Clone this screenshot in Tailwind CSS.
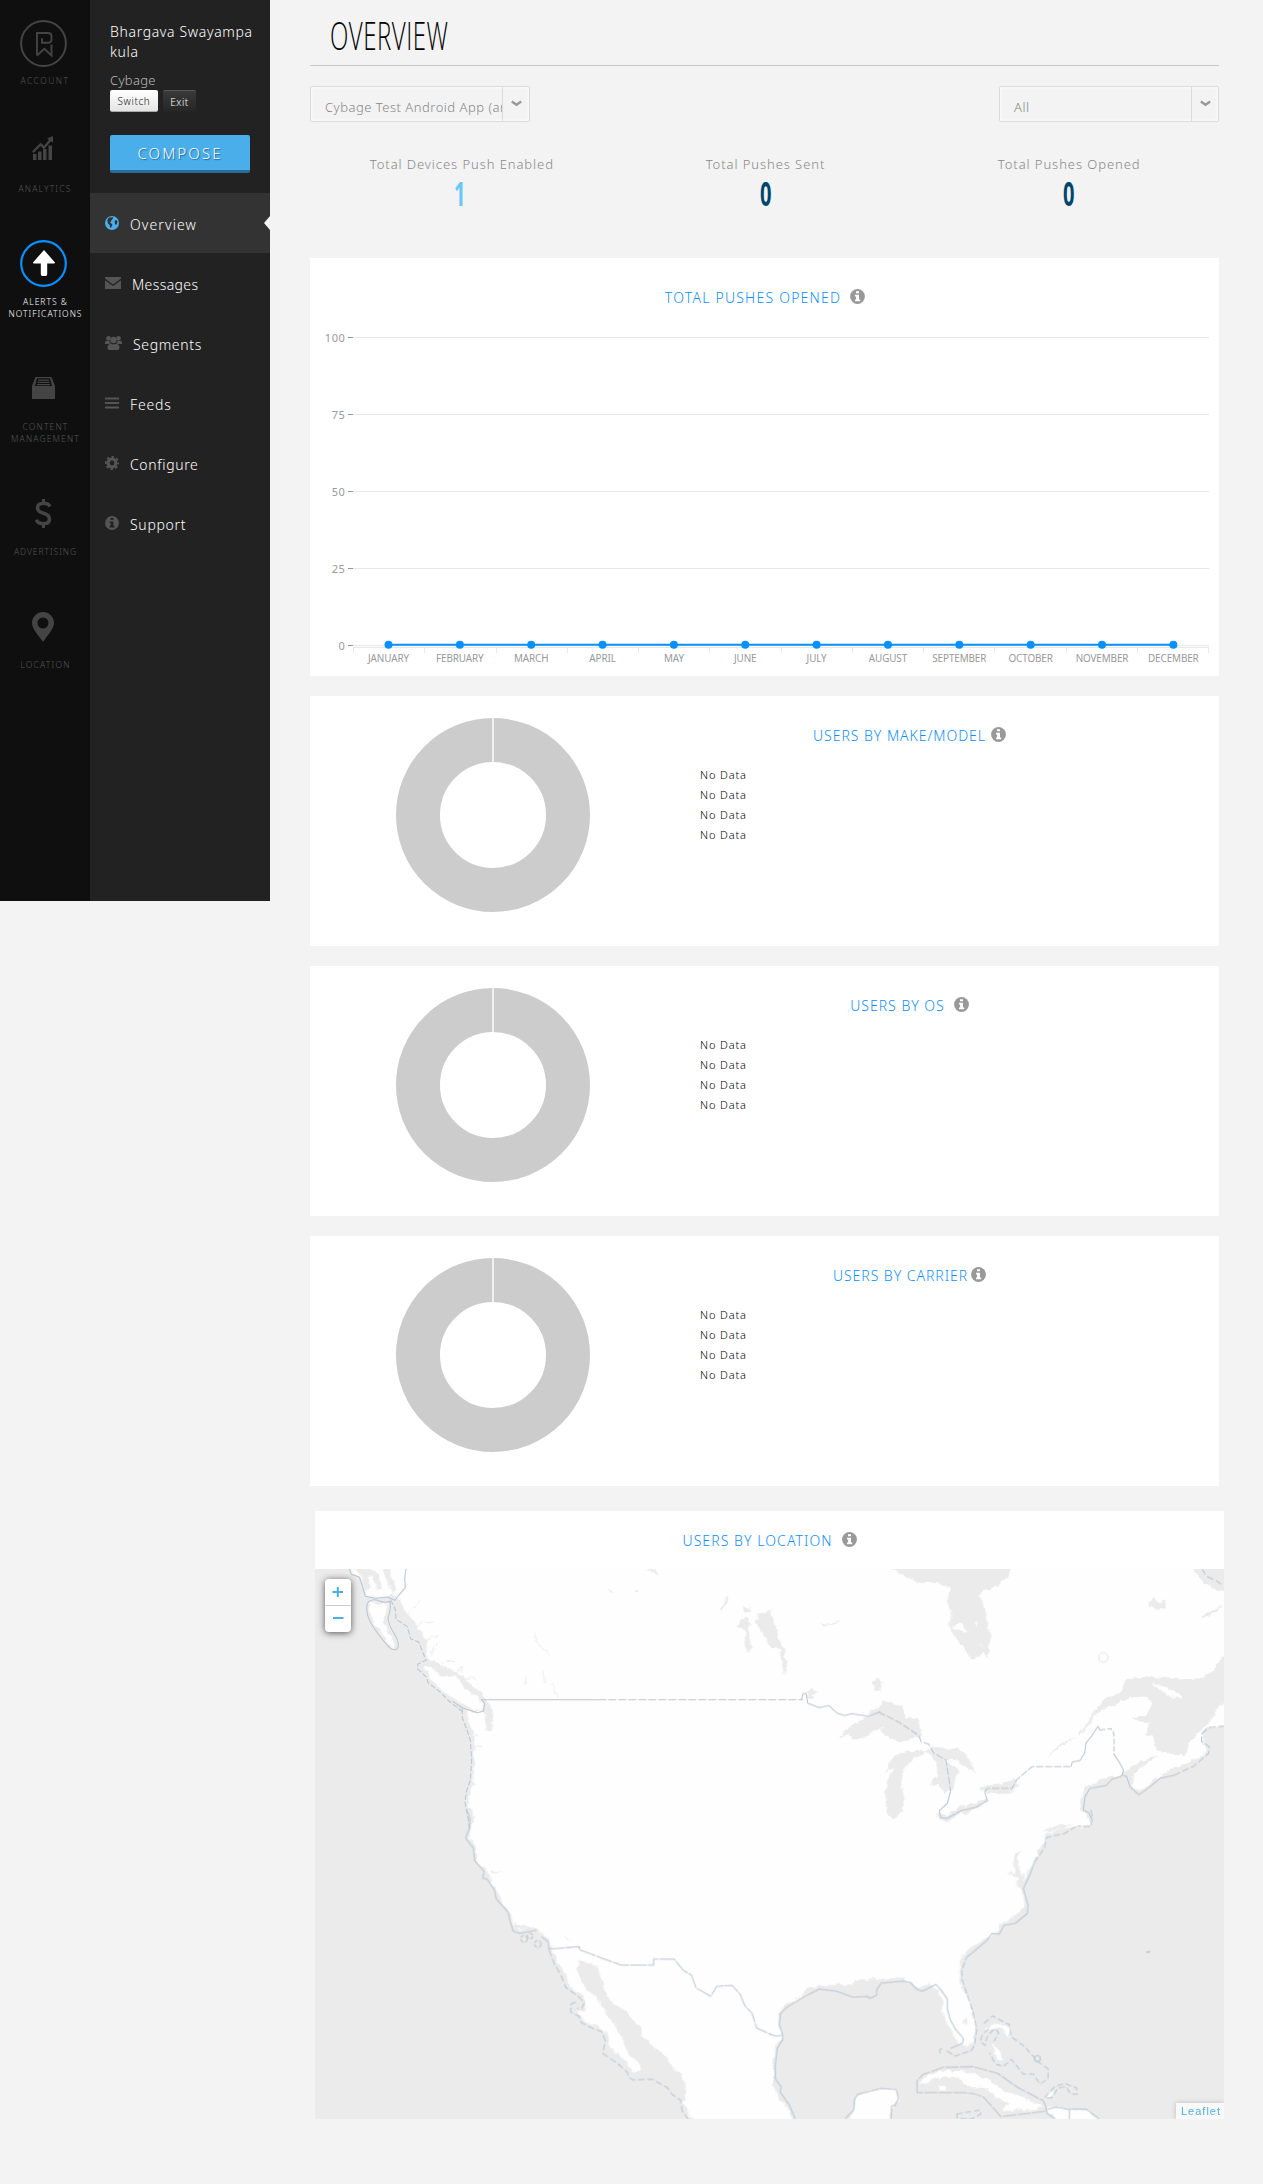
<!DOCTYPE html>
<html lang="en">
<head>
<meta charset="utf-8">
<title>Overview</title>
<script src="https://cdn.jsdelivr.net/npm/@tailwindcss/browser@4"></script>
</head>
<body class="flex h-[2184px] w-[1263px] items-start overflow-hidden bg-[#f3f3f3] font-['Noto_Sans',sans-serif] font-light">

<svg class="hidden">
  <symbol id="info" viewBox="0 0 15 15"><circle cx="7.5" cy="7.5" r="7.4" fill="currentColor"/><path fill="var(--hole,#fff)" d="M6 2.2h3v2.1H6zM5 5.8h4v4.6h1.2v1.8H5v-1.8h1.1V7.5H5z"/></symbol>
  <symbol id="donut" viewBox="0 0 196 196"><circle cx="98" cy="98" r="75" fill="none" stroke="#ccc" stroke-width="44"/><path d="M98 0v46" stroke="#fff" stroke-width="1.4"/></symbol>
</svg>

<!-- Product rail -->
<aside class="flex h-[901px] w-[90px] shrink-0 flex-col items-center bg-[#0f0f0f] pt-5 pr-[2px] text-center text-[8.5px] leading-3 text-[#555]">
  <svg class="-ml-[1px] size-[47px] shrink-0" viewBox="0 0 47 47" fill="none" stroke="#444" stroke-width="1.9"><circle cx="23.5" cy="23.5" r="22.4" stroke-width="2"/><path d="M17 35.500V13h11q3.500 0 3.500 3.500v2.800q0 3.500-3.500 3.500H22v-4.500M17 35.500l7.300-6.800 7.200 6.800V24.500"/></svg>
  <span class="mt-2 pl-[2px] tracking-[1.5px]">ACCOUNT</span>
  <svg class="-ml-[4px] mt-[49px] h-6 w-[21px] shrink-0" viewBox="0 0 21 24" fill="#444"><path d="M1 18h3.500v6H1zM6 15.500h3.500V24H6zM11 13h3.500v11H11zM16.500 9.500H20V24h-3.500z"/><path d="M0 15.500 8.500 6.700l3.500 3L17 4l-2-1.500L21 0v6.500l-2-1.200-7 8-3.600-3.200-6.600 6.800z"/></svg>
  <span class="mt-[23px] pl-[2px] tracking-[1.2px]">ANALYTICS</span>
  <svg class="-ml-[1px] mt-[45px] size-[47px] shrink-0" viewBox="0 0 47 47"><circle cx="23.5" cy="23.5" r="22.3" fill="none" stroke="#0990ff" stroke-width="2.200"/><path fill="#fff" d="M24 10 35 22.500q0 1-1 1h-6.800V34q0 2-1.500 2h-3.400q-1.500 0-1.500-2V23.500H14q-1 0-1-1z"/></svg>
  <span class="mt-[9px] whitespace-nowrap pl-[3px] tracking-[1px] text-white">ALERTS &amp;<br>NOTIFICATIONS</span>
  <svg class="-ml-[1px] mt-[57px] h-[22px] w-[23px] shrink-0" viewBox="0 0 23 22" fill="#444"><path fill-rule="evenodd" d="M3.500 0h16L23 9v13H0V9zM5 1.200 3 9h17l-2-7.800z"/><path d="M6 2.600h11v1.200H6zM5.500 4.800h12V6h-12zM5 7h13v1.200H5z"/></svg>
  <span class="mt-[22px] whitespace-nowrap pl-[3px] tracking-[1.15px]">CONTENT<br>MANAGEMENT</span>
  <svg class="-ml-[1px] mt-[54px] h-[29px] w-[17px] shrink-0" viewBox="0 0 17 29" fill="none" stroke="#444"><path d="M15 7.500Q13.500 4.300 8.500 4.300 2.500 4.300 2.500 9q0 3.600 6 5.200t6 5.800q0 4.700-6 4.700-5.500 0-7.200-4" stroke-width="3.600"/><path d="M8.500 0v4M8.500 25v4" stroke-width="3"/></svg>
  <span class="mt-[18px] whitespace-nowrap pl-[3px] tracking-[0.95px]">ADVERTISING</span>
  <svg class="-ml-[2px] mt-[54px] h-[30px] w-[22px] shrink-0" viewBox="0 0 22 30"><path fill="#444" fill-rule="evenodd" d="M11 0a11 11 0 0 1 11 11c0 6-7 13-11 19C7 24 0 17 0 11A11 11 0 0 1 11 0m0 5.500a5.500 5.500 0 1 0 0 11 5.500 5.500 0 0 0 0-11"/></svg>
  <span class="mt-[17px] whitespace-nowrap pl-[3px] tracking-[1.2px]">LOCATION</span>
</aside>

<!-- Section menu -->
<nav class="h-[901px] w-[180px] shrink-0 bg-[#222] pt-[22px] text-white">
  <div class="flex h-[171px] flex-col items-start pl-5">
    <div class="whitespace-nowrap text-[14px] leading-5 tracking-[0.65px]">Bhargava Swayampa<br>kula</div>
    <div class="mt-[9px] text-[13px] leading-[18px] tracking-[0.3px] text-[#bbb]">Cybage</div>
    <div class="mt-[1px] flex gap-[5px] text-[10px] leading-[22px]">
      <button class="h-[22px] w-12 rounded-[2px] border-b border-[#aaa] bg-gradient-to-b from-white to-[#e4e4e4] tracking-[0.6px] text-[#222]">Switch</button>
      <button class="h-[22px] w-[33px] rounded-[2px] border-t border-[#555] bg-gradient-to-b from-[#3a3a3a] to-[#252525] leading-5 tracking-[0.5px] text-white">Exit</button>
    </div>
    <button class="mt-[23px] h-[38px] w-[140px] rounded-[2px] border-b-[3px] border-[#2b6e9c] bg-[#4aaeeb] pt-[2px] text-[15px] leading-[33px] tracking-[2.1px] [text-shadow:1px_1px_1px_#1f5f8b]">COMPOSE</button>
  </div>
  <ul class="text-[14px]">
    <li class="relative flex h-[60px] items-center bg-[#333] pl-[15px] tracking-[1.1px]">
      <svg class="mr-[11px] size-[14px]" viewBox="0 0 14 14"><circle cx="7" cy="7" r="7" fill="#4aaeeb"/><path fill="#333" d="M3 2.600 5 1.300l1.600.3L7.600 1l.6 1-1.200 1.700-1 .5.600.8L5 6.200l.6.8L7.400 8.300 6.800 10 6 12 5 11 4.700 8.900 3 7.400 2.400 5zM9.800 4.500l1.700-.6 1 2-.6 2.200-1.200.8-.9-1.700z"/></svg><span class="pt-[2px]">Overview</span>
      <span class="absolute right-0 h-0 w-0 border-y-[7px] border-r-[6px] border-y-transparent border-r-[#f3f3f3]"></span>
    </li>
    <li class="flex h-[60px] items-center pl-[15px] tracking-[0.4px]">
      <svg class="mr-[11px] h-3 w-4" viewBox="0 0 16 12" fill="#555"><path d="M0 0h16v1.600L8 7.500 0 1.600z"/><path d="M0 3.200 8 9l8-5.800V12H0z"/></svg><span class="pt-[2px]">Messages</span>
    </li>
    <li class="flex h-[60px] items-center pl-[15px] tracking-[0.65px]">
      <svg class="mr-[11px] h-4 w-[17px]" viewBox="0 0 17 16" fill="#555"><circle cx="3.500" cy="3.200" r="2.300"/><circle cx="13.500" cy="3.200" r="2.300"/><circle cx="8.500" cy="5" r="3.200"/><path d="M0 9V7.500q0-1.700 1.500-1.700h3Q4.500 8 6 8.800 3.500 8.600 3 9zM17 9V7.500q0-1.700-1.500-1.700h-3Q12.500 8 11 8.800q2.500-.2 3 .2zM2.500 13q0-4 3.200-4.300Q8.500 10 11.300 8.700 14.500 9 14.500 13q0 2-2 2h-8q-2 0-2-2z"/></svg><span class="pt-[2px]">Segments</span>
    </li>
    <li class="flex h-[60px] items-center pl-[15px] tracking-[0.8px]">
      <svg class="mr-[11px] h-3 w-[14px]" viewBox="0 0 14 12" fill="#555"><path d="M0 .5h14v2H0zM0 5h14v2H0zM0 9.500h14v2H0z"/></svg><span class="pt-[2px]">Feeds</span>
    </li>
    <li class="flex h-[60px] items-center pl-[15px] tracking-[0.65px]">
      <svg class="mr-[11px] size-[14px]" viewBox="0 0 14 14"><circle cx="7" cy="7" r="3.900" fill="none" stroke="#555" stroke-width="3"/><circle cx="7" cy="7" r="6.100" fill="none" stroke="#555" stroke-width="1.900" stroke-dasharray="2.650 2.140" stroke-dashoffset="1.320"/></svg><span class="pt-[2px]">Configure</span>
    </li>
    <li class="flex h-[60px] items-center pl-[15px] tracking-[0.7px]">
      <svg class="mr-[11px] size-[14px] text-[#555] [--hole:#222]"><use href="#info"/></svg><span class="pt-[2px]">Support</span>
    </li>
  </ul>
</nav>

<main class="ml-10 w-[914px] shrink-0">
  <header class="h-[66px] w-[909px] border-b border-[#c8c8c8] pl-5">
    <h1 class="inline-block origin-left scale-x-[0.632] whitespace-nowrap font-['Open_Sans'] text-[38px] font-light leading-[70px] tracking-[0.8px] text-black">OVERVIEW</h1>
  </header>

  <div class="mt-5 flex w-[909px] justify-between text-[13px] text-[#888]">
    <div class="flex h-9 w-[220px] rounded-[2px] border border-[#dcdcdc] shadow-[inset_0_0_4px_#fff]">
      <span class="w-[192px] overflow-hidden whitespace-nowrap border-r border-[#dcdcdc] pl-[14px] leading-[40px] tracking-[0.5px]">Cybage Test Android App (an</span>
      <svg class="ml-2 mt-[13px] h-[7px] w-[11px]" viewBox="0 0 11 7"><path d="M.8 1.500 5.500 4.800l4.700-3.300" fill="none" stroke="#999" stroke-width="2.400"/></svg>
    </div>
    <div class="flex h-9 w-[220px] rounded-[2px] border border-[#dcdcdc] shadow-[inset_0_0_4px_#fff]">
      <span class="w-[192px] overflow-hidden whitespace-nowrap border-r border-[#dcdcdc] pl-[14px] leading-[40px] tracking-[0.5px]">All</span>
      <svg class="ml-2 mt-[13px] h-[7px] w-[11px]" viewBox="0 0 11 7"><path d="M.8 1.500 5.500 4.800l4.700-3.300" fill="none" stroke="#999" stroke-width="2.400"/></svg>
    </div>
  </div>

  <div class="mt-[33px] grid h-[103px] w-[911px] grid-cols-3 text-center text-[13px] leading-[18px] tracking-[0.93px] text-[#888]">
    <div>Total Devices Push Enabled<div class="-ml-1 scale-x-[0.6] font-['Open_Sans'] text-[33.500px] font-bold leading-[40px] tracking-normal text-[#69c8fa]">1</div></div>
    <div>Total Pushes Sent<div class="scale-x-[0.6] font-['Open_Sans'] text-[33.500px] font-bold leading-[40px] tracking-normal text-[#00476f]">0</div></div>
    <div>Total Pushes Opened<div class="scale-x-[0.6] font-['Open_Sans'] text-[33.500px] font-bold leading-[40px] tracking-normal text-[#00476f]">0</div></div>
  </div>

  <!-- Pushes opened, by month -->
  <section class="h-[418px] w-[909px] bg-white pt-[30px]">
    <h2 class="flex h-5 items-center justify-center pl-[1px] text-[14px] leading-5 tracking-[1.22px] text-[#0990ff]">TOTAL PUSHES OPENED<svg class="-mt-[3px] ml-[9px] size-[15px] text-[#999]"><use href="#info"/></svg></h2>
    <svg id="chart" class="mt-[20px] block h-[348px] w-[909px] font-normal" viewBox="310 328 909 348"></svg>
  </section>

  <section class="mt-5 flex h-[250px] w-[909px] bg-white">
    <svg class="ml-[84.500px] mt-[20.500px] size-[196px]"><use href="#donut"/></svg>
    <div class="ml-[109.500px] w-[419px] pt-[30px]">
      <h2 class="flex h-5 items-center justify-center text-[14px] leading-5 tracking-[0.97px] text-[#0990ff]">USERS BY MAKE/MODEL<svg class="-mt-[3px] ml-[5px] size-[15px] text-[#999]"><use href="#info"/></svg></h2>
      <ul class="mt-[19px] text-[11px] leading-5 tracking-[0.88px] text-black"><li>No Data</li><li>No Data</li><li>No Data</li><li>No Data</li></ul>
    </div>
  </section>
  <section class="mt-5 flex h-[250px] w-[909px] bg-white">
    <svg class="ml-[84.500px] mt-[20.500px] size-[196px]"><use href="#donut"/></svg>
    <div class="ml-[109.500px] w-[419px] pt-[30px]">
      <h2 class="flex h-5 items-center justify-center text-[14px] leading-5 tracking-[1px] text-[#0990ff]">USERS BY OS<svg class="-mt-[3px] ml-[9px] size-[15px] text-[#999]"><use href="#info"/></svg></h2>
      <ul class="mt-[19px] text-[11px] leading-5 tracking-[0.88px] text-black"><li>No Data</li><li>No Data</li><li>No Data</li><li>No Data</li></ul>
    </div>
  </section>
  <section class="mt-5 flex h-[250px] w-[909px] bg-white">
    <svg class="ml-[84.500px] mt-[20.500px] size-[196px]"><use href="#donut"/></svg>
    <div class="ml-[109.500px] w-[419px] pt-[30px]">
      <h2 class="flex h-5 items-center justify-center text-[14px] leading-5 tracking-[0.97px] text-[#0990ff]">USERS BY CARRIER<svg class="-mt-[3px] ml-[3px] size-[15px] text-[#999]"><use href="#info"/></svg></h2>
      <ul class="mt-[19px] text-[11px] leading-5 tracking-[0.88px] text-black"><li>No Data</li><li>No Data</li><li>No Data</li><li>No Data</li></ul>
    </div>
  </section>

  <!-- Map -->
  <section class="ml-[5px] mt-[25px] w-[909px] bg-white">
    <h2 class="flex h-[58px] items-center justify-center pt-[2px] text-[14px] leading-5 tracking-[1.07px] text-[#0990ff]">USERS BY LOCATION<svg class="-mt-[3px] ml-[9px] size-[15px] text-[#999]"><use href="#info"/></svg></h2>
    <div class="relative h-[550px] w-[909px] overflow-hidden">
      <svg class="block h-[550px] w-[909px]" viewBox="15 207 2727 1650">
        <defs><filter id="coast" filterUnits="userSpaceOnUse" x="-50" y="150" width="2860" height="1770"><feTurbulence type="fractalNoise" baseFrequency=".05" numOctaves="3" seed="4" result="n"/><feDisplacementMap in="SourceGraphic" in2="n" scale="17" xChannelSelector="R" yChannelSelector="G"/></filter></defs>
        <rect x="0" y="200" width="2760" height="1670" fill="#fefefe"/>
        <g fill="#ebebeb" filter="url(#coast)">
          <!-- north-west -->
          <path d="M-20 180H108L130 222 152 235 165 265 170 288 232 292 250 282 272 310 300 352 338 400 352 435 352 476 400 500 445 520 490 562 515 575 530 602 548 630 546 690 530 690 527 640 470 632 470 655 487 690 494 740 490 850 476 900 476 925 490 970H-20z"/>
          <path d="M128 205l22 14 16 50 18-3-12-34 18-8 12 50 12-6-10-46-24-22zM215 205l22 50 10 25 14-12-20-38 2-28zM272 320l12 20 30 35 20 40-26-24-38-45zM1338 365l8-22 36-12v104l-20-24zM1280 380l24-32 18 20-8 25 12 56-12 9-12-38 4-24zM1300 318l16 8 6-10-4 18-18 2zM1005 205l30 0 14 30-10-12zM970 278l12-14 4 8zM890 270l14 2-4 6zM1230 320l12-8 4-20 8-8-4 30-18 20zM640 555l10-26-2 24z"/>
          <path fill="none" stroke="#ebebeb" stroke-width="3" d="M290 345l22-24 16-18M320 385l22-22 26 4M345 430l20-20 22-4M360 470l10-26 16-16M395 495l16-14 24 4M440 520l16-22 2 22M470 545l18-16 10 12M262 290l16-26 18-12M490 705l16 6M490 738l26 2M670 400l16 32 32 32M700 510l4 40M725 545l18 50"/>
          <!-- north-east -->
          <g transform="translate(1380 0)">
            <path d="M350 180H740L712 228 680 258 625 283 640 318 650 345 655 380 665 412 655 440 656 480 640 455 612 482 600 475 590 450 565 425 550 400 538 380 543 345 530 300 540 265 500 250 440 248 362 207z"/>
            <path d="M-6 325 15 370 25 410 45 460 55 500 42 525 35 490 30 450-6 436zM308 550l14-17 18 15-10 27-18-4z"/>
            <path d="M205 713l35-33 30-18 28-12 2-20 30-12 10-18 25 10 30 5 15 35 35 5 5 35 5 25-25 0-40 13-25-13-20-7-15-18 15-12-35 17-35 23-25 0-15-10z"/>
            <path d="M343 815l28-48 49-14 50 0-12 14-28 0-2 14-25 25-12 40 12 48-8 42-25 22-20-17-5-60 8-42 18-38z"/>
            <path d="M470 752l20-12 60 6 28 6 18 25 22 44-18-10-42-34-30 0 2 8 18 10 20 20-13 25-7 35-13-5-10 10-20-30-20 12-3-12 20-20-2-40z"/>
            <path d="M500 940l30 5 40-25 50-10 30-16 8 10-58 32-40 9-25 20-26-5zM625 872l25-17 40-5 45-10 10 15-25 26-50 0z"/>
            <path d="M925 705l25-35 20-30 30-40 50-22 15-34 15-10 50-4 110 8 60-4 30-25 20-32 50-24V580l-60 50-22 38-22 22-22 14-18 28-8 32-24 4-34-10-26-14-16-30-20-10 10-35-30-5-25-10 45-10 20-30-15-22-35-4-40 14-50 20-30 20-20 30-24 32z"/>
            <path d="M1400 672l-80 10-24 14 6 40 8 14-20 20-46 22-54 24-40 24-42 36-20-20 6-36 36-30 34-22-56 18-46 26-14 14-50 10-50 26-14 30-6 30 16 14 16 34H1400z"/>
            <path d="M1250 180h150V270l-54 6-46-30-16-20zM1135 320l14-26 16 14 20-10 6 28-26 6-20-12zM1295 355l14-20 50-18-34 28zM150 368l10 12 50-12 40-46-36 42-48 10zM110 575l14-8 20 10-18 6 2 14-12-4zM830 775l20-26 34-28 40-12-38 18-34 28z"/>
            <path d="M1150 728l20 10 30 10 24 0 0 12-40-4-24-8z"/>
          </g>
          <!-- south-west -->
          <g transform="translate(0 930)">
            <path d="M-20-5H488L488 40 478 85 498 115 500 150 530 180 542 205 545 225 565 240 568 265 605 315 605 340 645 345 680 360 705 375 720 395 722 420 745 460 770 500 775 525 820 560 830 600 800 605 820 630 860 645 890 670 900 715 940 745 970 790 988 775 985 755 955 735 935 680 910 640 880 600 870 575 815 520 803 480 805 450 830 458 865 470 880 530 900 570 940 600 995 655 995 680 1040 715 1075 750 1115 800 1133 845 1120 880 1140 915 1175 960H-20z"/>
            <path d="M765 380l12 4 2 8zM545 182l36 4-34 4z"/>
          </g>
          <!-- south-east -->
          <g transform="translate(1380 930)">
            <path d="M963-5L965 45 920 50 880 55 820 75 825 85 805 125 795 150 780 175 760 210 748 235 760 260 765 290 730 320 690 345 680 365 645 385 590 420 572 450 568 500 575 530 600 575 615 640 610 695 590 708 565 700 545 665 530 635 515 600 520 570 500 540 485 520 440 532 420 520 400 505 345 505 310 510 270 515 230 525 160 525 110 535 90 565 50 580 25 610 25 650 38 680 20 700 8 760 8 820 25 860 55 900 85 950H225L250 900 258 860 290 845 345 835 380 840 385 870 362 895 360 950H870L850 915 830 905 830 890 900 895 960 905 1000 950H1400V-5z"/>
            <path d="M735 130l20-8-12 24 4 30 14 20-4 28-14 14-2-34-30-18 24 4-6-26zM230 545l20-30 30-8 40 0-20 40-30 10zM580 632l8-6 4 12-6 8zM820 62l40-16 50-6-30 14-56 14z"/>
          </g>
        </g>
        <!-- islands -->
        <g fill="#fefefe" filter="url(#coast)">
          <path d="M178 305l27 10 30-7-5 22-8 35 10 30 23 37-5 13-25-30-30-40-15-35zM340 500l25 2 35 28 40 0 25 40 35 20 20 20-5 26-35-10-40-26-40-25-30-30z"/>
          <g transform="translate(1380 0)"><path d="M545 378l25-8 18 15 0 13-28-8zM1145 550l25 5 65 30 0 10-35-7-35-18zM612 362l6 0 2 18-6-4zM628 435l8-3 0 10z"/></g>
          <g transform="translate(1380 930)">
            <path d="M445 825l25-30 50-13 50-2 50 15 40 15 40 30 60 25 60 20-20 15-110 3 25-23-40-20-20-25-55-5-45-30-55 5-30 15zM510 826l16 2-2 14-14-2z"/>
            <path d="M650 655l40-16 30 20-4 26-12-16-14-20-36 12zM670 703l20 24 10 24-18-4-10-20zM828 855l20-10 6 10-20 8z"/>
          </g>
          <path d="M620 1286l12-3-2 6zM636 1284l10 0-4 4z"/>
        </g>
        <!-- borders -->
        <g fill="none" stroke="#b9c7d3" stroke-width="3.200" stroke-linejoin="round">
          <path d="M118 207l6 16 24 8 10 30 8 28 30 6 36-4 22 10 8-10 24-28-2-28 4-28M172 310q14-16 34-8 20 8 34 2 4 26-6 50 4 26 16 42 22 36 12 50-12 10-30-10-34-38-52-72-14-26-8-54"/>
          <path d="M242 300l14 28 2 30 34 22 10 36 24 10 16 40 6 14-24 12-2 14 28 26 4 16 34 26 32 32 40 30M457 626l0 28 14 36 10 30 4 60-4 60-12 34-4 34 10 50 4 30" stroke-dasharray="16 6"/>
          <path d="M428 604l30 20 44 14 18-4 4-24-10-11"/>
          <path d="M515 599H865"/>
          <path d="M865 599H1478" stroke-dasharray="24 6"/>
          <g transform="translate(1380 0)">
            <path d="M95 599l4-18 10 0 4 28 34 14 30-6 24 22 24 8 20-6 50 8 36-14"/>
            <path d="M326 636l60 30 60 40 8 20 22 6 16 28 36 20 14 92" stroke-dasharray="22 6"/>
            <path d="M542 872l-10 38-24 22 4 20 18 4 44-24 44-10 34-20-8-26"/>
            <path d="M644 875l8-10 74 0 14-26 46-39 118 0" stroke-dasharray="22 5"/>
            <path d="M904 799l2-12 24-6 14-22 4-30 16-20 20-30 6 12"/>
            <path d="M990 690l34-4 8 16 0 60" stroke-dasharray="16 6"/>
            <path d="M1031 762l14 20 16 28-6 18-30 10-16 18-50 10-14 24-5 40 16 8 10 20M1060 826l10 4 10 30 26 24 22-14 44-36 40-8"/>
            <path d="M1212 826l60-28 44-38 2-20-24-16 2-24 24-18 42-4M1296 207l14 22 30 14 20 14" stroke-dasharray="20 8"/>
          </g>
          <g transform="translate(0 930)">
            <path d="M470 0l10 26-2 30-12 28 24 30 4 38 28 32-4 20 14 4 22 34 4 24 36 40 8 34 8 24 20 6 50-10M695 380l20 16 2 22"/>
            <circle cx="642" cy="386" r="10" stroke-dasharray="12 5"/><circle cx="660" cy="378" r="8" stroke-dasharray="12 5"/><circle cx="683" cy="402" r="10" stroke-dasharray="12 5"/>
            <path d="M715 417l94-7-2 9 126 46 98 0 0-18 61 0 28 34 24 14 14 38 44 26 18-30 46-3 24 26 14 34 22 24 14 44 44 20" stroke-dasharray="50 3"/>
            <path d="M717 420l16 42 20 34 14 36 42 30 14 16-8 18-14 0M798 576l-16 6 0 24 26 14 6 18 40 20 20 6 12 28-8 38 44 30 30 26 4 16 14 8 56-3 46 26 14 20 26 18 4 30 22 32" stroke-dasharray="20 8"/>
          </g>
          <g transform="translate(1380 930)">
            <path d="M0 672l18 6 20-3 0 14-16 24-6 50 0 44 18 24-4 14 28 40 18 42M38 675l-10-30 4-36 20-18 60-36 36-18 50 6 50 18 44-2 8 6 20-10 0-16 14-20 66-6 20 4 22 22 16 4 40-20 14 16 20 28 0 30 8 30 16 30 24 28-2 14-36 16"/>
            <path d="M530 722l24 16 50-16 10-20 6-44-10-50-34-100 0-30 14-36" stroke-dasharray="20 6"/>
            <path d="M590 442l60-50 16-22 22 2 14-26 34-6 36-30 2-26-14-48 20-42 12-36"/>
            <path d="M792 158l32-46 6-30 54-12 40-24M963 0l4 20-4 30-40-2" stroke-dasharray="20 7"/>
            <path d="M441 848l0-36 18-18 60-22 90-2 74 20 60 42 76 40 10 20-6 12-130 16-50-56q-20-14-60-16z" stroke-dasharray="40 4"/>
            <path d="M560 912l70-12 2 12-30 16-40-4zM642 640l26-22 50 26 6 36 40 30 40 46 30 20 0 30-24 16-20-30-30 0-36-44-24 22-24-8-18-34M656 656q-26 20-24 40l14 10q0-30 30-50l10 12-14 26M824 862l30-32 30-10 36 14 2 18-20 0-14-22-24 4-20 30zM516 716a8 8 0 1 0 2 16" stroke-dasharray="18 8"/>
            <circle cx="802" cy="746" r="9"/>
            <path d="M225 927l26-28 2-30 10-16 70-18 46 4 6 26-10 22-10 0-2 40M856 927l-24-16-4-12 30-8 40 8 0 28M898 897l50 0 40 30"/>
            <path d="M1129 426l10-2-4 4z"/>
          </g>
        </g>
        <circle cx="2380" cy="472" r="14" fill="none" stroke="#ebebeb" stroke-width="4"/>
      </svg>
      <div class="absolute left-[10px] top-[10px] flex w-[26px] flex-col rounded-[4px] bg-white shadow-[0_1px_7px_rgba(0,0,0,0.65)]">
        <svg class="h-[53px] w-[26px]" viewBox="0 0 26 53"><path d="M0 26.500h26" stroke="#ccc"/><path d="M7.500 13h10.500M12.800 8v10M8 39h10.500" stroke="#4aaeeb" stroke-width="2"/></svg>
      </div>
      <div class="absolute bottom-0 right-0 h-4 w-12 whitespace-nowrap bg-white/70 pl-[5px] font-['Liberation_Sans'] text-[11px] font-normal leading-4 tracking-[1px] text-[#4aaeeb] shadow-[0_0_5px_#bbb]">Leaflet</div>
    </div>
  </section>
</main>

<script>
// Monthly push chart
const months = ['JANUARY','FEBRUARY','MARCH','APRIL','MAY','JUNE','JULY','AUGUST','SEPTEMBER','OCTOBER','NOVEMBER','DECEMBER'];
const x = i => 388.5 + i * 71.35;
let s = '';
[100, 75, 50, 25, 0].forEach((v, i) => {
  const y = 337.5 + i * 77;
  s += `<path d="M353 ${y}H1209" stroke="#e8e8e8"/><path d="M348 ${y}h5" stroke="#999"/>`;
  s += `<text x="345.500" y="${y + 4.5}" text-anchor="end" font-size="11" letter-spacing=".6" fill="#999">${v}</text>`;
});
s += '<path d="M353 647.5H1209" stroke="#e8e8e8"/>';
for (let i = 0; i <= 12; i++) s += `<path d="M${Math.round(353 + i * 71.25) + .5} 647v6" stroke="#e8e8e8"/>`;
s += `<path d="M${x(0)} 644.800H${x(11)}" stroke="#0990ff" stroke-width="2"/>`;
months.forEach((m, i) => {
  s += `<circle cx="${x(i)}" cy="644.800" r="4" fill="#0990ff"/><text x="${x(i)}" y="662" text-anchor="middle" font-size="9.900" letter-spacing="-.1" fill="#999">${m}</text>`;
});
document.getElementById('chart').innerHTML = s;
</script>
</body>
</html>
